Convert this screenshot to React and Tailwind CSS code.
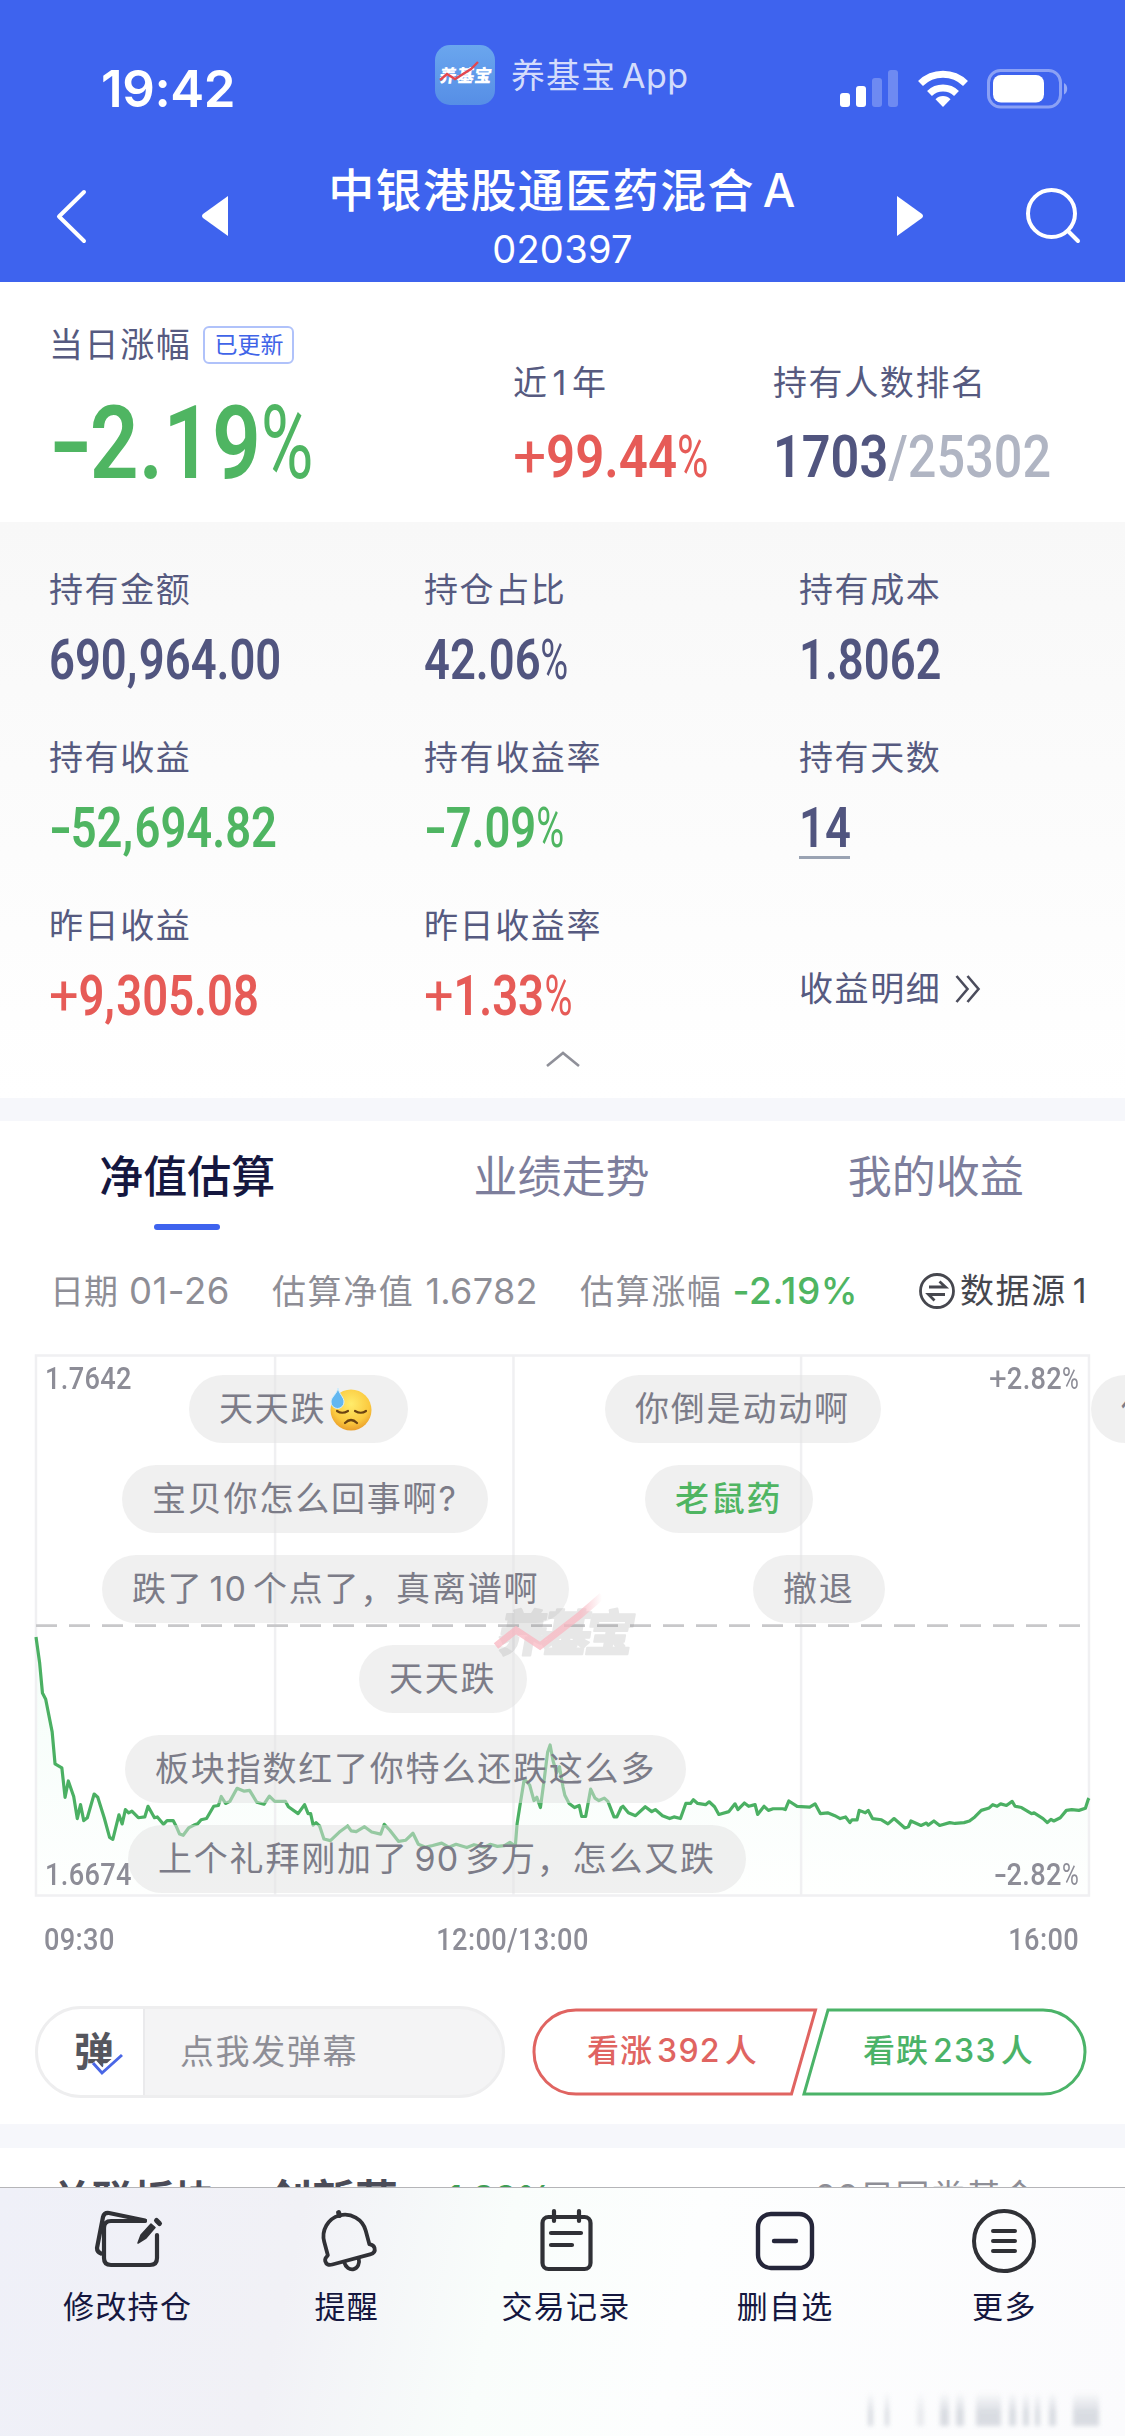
import React from "react";

/* Per-character adjustments that give the figures their narrow percent sign and wide signs. */
const glyphStyle = {
  "%": "inline-block origin-left scale-x-[0.84] -mr-[0.12em] font-normal",
  "+": "inline-block origin-left scale-x-[1.15] mr-[0.08em] font-normal",
  "-": "inline-block origin-left scale-x-[1.4] mr-[0.11em]",
  ",": "mr-[0.03em]",
};

/* Condensed figure used for every amount and percentage. */
function Num({ value, children, className = "" }) {
  return (
    <span className={`inline-block whitespace-nowrap font-['Roboto',sans-serif] ${className}`}>
      {value.split(/([%+,-])/).map((part, i) =>
        glyphStyle[part] ? (
          <span key={i} className={glyphStyle[part]}>
            {part}
          </span>
        ) : (
          part
        )
      )}
      {children}
    </span>
  );
}

function StatusBar() {
  return (
    <div className="flex h-[140px] text-white">
      <div className="w-[435px] pl-[101px] pt-[59px] text-[51px] font-semibold leading-[60px] tracking-[-0.4px]">
        19:42
      </div>
      <div className="flex w-[405px] pt-[45px]">
        <svg className="h-[60px] w-[60px]" viewBox="0 0 60 60">
          <defs>
            <linearGradient id="appBg" x1="0" y1="0" x2="0" y2="1">
              <stop offset="0" stopColor="#6aa6ee" />
              <stop offset="1" stopColor="#568ee6" />
            </linearGradient>
          </defs>
          <rect width="60" height="60" rx="15" fill="url(#appBg)" />
          <text x="30" y="37" textAnchor="middle" fontSize="17.5" fontWeight="900" fill="#fff" fontFamily="'Noto Sans CJK SC', sans-serif" transform="translate(5 0) skewX(-8)">
            养基宝
          </text>
          <path d="M5 35 L12 29 L20 34 L36 24 L43 17" fill="none" stroke="#e2474f" strokeWidth="2.4" />
        </svg>
        <div className="ml-[16px] mt-[11px] whitespace-nowrap text-[34px] leading-[40px] tracking-[1px] text-[#d3dcfb]">
          养基宝<span className="ml-[6px] tracking-[0.5px]">App</span>
        </div>
      </div>
      <svg className="mt-[64px] h-[50px] w-[240px]" viewBox="0 0 240 50">
        <g fill="#fff">
          <rect x="0" y="29" width="10" height="14" rx="3" />
          <rect x="16" y="22" width="10" height="21" rx="3" />
          <rect x="32" y="14" width="10" height="29" rx="3" opacity=".25" />
          <rect x="48" y="6" width="10" height="37" rx="3" opacity=".25" />
          <path d="M103 43 L95.5 35.2 A10.6 10.6 0 0 1 110.500 35.2 Z" />
        </g>
        <g fill="none" stroke="#fff" strokeWidth="7">
          <path d="M89.500 29.500 A19.500 19.500 0 0 1 116.500 29.500" />
          <path d="M80.500 19.500 A32 32 0 0 1 125.500 19.500" />
        </g>
        <rect x="148.500" y="6.500" width="72" height="36.500" rx="12" fill="none" stroke="#fff" strokeWidth="3" opacity=".4" />
        <path d="M224 19 a6 6.500 0 0 1 0 11.500 Z" fill="#fff" opacity=".45" />
        <rect x="153" y="11" width="51" height="27.500" rx="8" fill="#fff" />
      </svg>
    </div>
  );
}

function TitleBar() {
  return (
    <div className="flex h-[142px] text-white">
      <svg className="mt-[46px] ml-[53px] h-[60px] w-[40px]" viewBox="0 0 40 60">
        <path d="M31 6 L6 30.500 L31 55" fill="none" stroke="#fff" strokeWidth="4" strokeLinecap="round" strokeLinejoin="round" />
      </svg>
      <svg className="mt-[56px] ml-[109px] h-[40px] w-[26px]" viewBox="0 0 26 40">
        <path d="M26 0 V40 L1 22 Q-1 20 1 18 Z" fill="#fff" />
      </svg>
      <div className="w-[669px] text-center">
        <div className="mt-[25px] whitespace-nowrap text-[46px] font-medium leading-[50px] tracking-[1.400px]">
          中银港股通医药混合<span className="ml-[8px]">A</span>
        </div>
        <div className="mt-[13px] text-[38px] leading-[42px] tracking-[0.3px]">020397</div>
      </div>
      <svg className="mt-[56px] h-[40px] w-[26px]" viewBox="0 0 26 40">
        <path d="M0 0 V40 L25 22 Q27 20 25 18 Z" fill="#fff" />
      </svg>
      <svg className="mt-[46px] ml-[102px] h-[60px] w-[60px]" viewBox="0 0 60 60">
        <circle cx="26.500" cy="27.500" r="23.500" fill="none" stroke="#fff" strokeWidth="4" />
        <path d="M43 45 L53 55" stroke="#fff" strokeWidth="4" strokeLinecap="round" />
      </svg>
    </div>
  );
}

const label = "whitespace-nowrap text-[34px] leading-[42px] tracking-[1.600px] text-[#565a80]";

function Summary() {
  return (
    <section className="flex h-[240px] bg-white">
      <div className="w-[513px] pl-[49px] pt-[42px]">
        <div className="flex items-center">
          <span className={label}>当日涨幅</span>
          <span className="ml-[12px] h-[38px] rounded-[6px] border-2 border-[#b0c2fa] px-[9px] text-[23px] leading-[34px] text-[#4064e8]">
            已更新
          </span>
        </div>
        <Num
          value="-2.19%"
          className="mt-[37px] origin-left scale-x-[0.84] text-[102px] font-semibold leading-[80px] text-[#4fb562]"
        />
      </div>
      <div className="w-[260px] pt-[80px]">
        <div className={label}>
          近<span className="mx-[4px]">1</span>年
        </div>
        <Num
          value="+99.44%"
          className="mt-[23px] origin-left scale-x-[0.85] text-[60px] font-semibold leading-[60px] text-[#e65b57]"
        />
      </div>
      <div className="pt-[80px]">
        <div className={label}>持有人数排名</div>
        <Num
          value="1703"
          className="mt-[23px] origin-left scale-x-[0.84] text-[60px] font-semibold leading-[60px] text-[#51557f]"
        >
          <span className="font-medium text-[#b0b5c3]">/25302</span>
        </Num>
      </div>
    </section>
  );
}

const holdings = [
  ["持有金额", "690,964.00", "text-[#51557f]"],
  ["持仓占比", "42.06%", "text-[#51557f]"],
  ["持有成本", "1.8062", "text-[#51557f]"],
  ["持有收益", "-52,694.82", "text-[#4fb562]"],
  ["持有收益率", "-7.09%", "text-[#4fb562]"],
  ["持有天数", "14", "text-[#51557f]"],
  ["昨日收益", "+9,305.08", "text-[#e65b57]"],
  ["昨日收益率", "+1.33%", "text-[#e65b57]"],
];

function Holdings() {
  return (
    <section className="h-[576px] bg-linear-to-b from-[#f8f8f8] to-white pt-[47px]">
      <div className="grid h-[462px] auto-rows-[168px] grid-cols-3">
        {holdings.map(([name, value, color]) => (
          <div key={name} className="pl-[49px]">
            <div className={label}>{name}</div>
            <Num
              value={value}
              className={`mt-[19px] origin-left scale-x-[0.825] text-[55px] font-semibold leading-[60px] ${color}`}
            />
            {name === "持有天数" && <div className="-mt-[2px] h-[3px] w-[51px] bg-[#9aa3b3]" />}
          </div>
        ))}
        <div className="flex pl-[49px] pt-[63px]">
          <span className={label}>收益明细</span>
          <svg className="ml-[14px] mt-[6px] h-[30px] w-[26px]" viewBox="0 0 26 30">
            <path d="M1.500 2 L12.500 15 L1.500 28 M12.500 2 L23.500 15 L12.500 28" fill="none" stroke="#4b4c5c" strokeWidth="2.6" />
          </svg>
        </div>
      </div>
      <svg className="mx-auto mt-[18px] h-[20px] w-[36px]" viewBox="0 0 36 20">
        <path d="M2 17 L18 4 L34 17" fill="none" stroke="#8f9099" strokeWidth="2.6" />
      </svg>
    </section>
  );
}

function Tabs() {
  return (
    <div className="grid grid-cols-3 pr-[2px] pt-[31px] text-center text-[44px] leading-[50px] text-[#7d7e9c]">
      <div className="font-medium text-[#15173f]">
        净值估算
        <div className="mx-auto mt-[22px] h-[6px] w-[66px] rounded-full bg-[#3e63ee]" />
      </div>
      <div>业绩走势</div>
      <div>我的收益</div>
    </div>
  );
}

function InfoRow() {
  return (
    <div className="mt-[39px] flex whitespace-nowrap pl-[50px] text-[34px] leading-[44px] text-[#8e8e96]">
      <div className="w-[222px]">
        日期<span className="ml-[11px] text-[36.500px] tracking-[0.500px]">01-26</span>
      </div>
      <div className="w-[308px] tracking-[1.600px]">
        估算净值<span className="ml-[11px] text-[36px] tracking-[0.300px]">1.6782</span>
      </div>
      <div className="w-[338px] tracking-[1.600px]">
        估算涨幅<span className="ml-[10px] text-[37px] font-medium tracking-[0.600px] text-[#4fb562]">-2.19%</span>
      </div>
      <div className="flex tracking-[1.600px] text-[#46474e]">
        <svg className="mt-[3px] h-[38px] w-[38px]" viewBox="0 0 38 38" fill="none" stroke="#46474e" strokeWidth="2.8">
          <circle cx="19" cy="19" r="16.500" />
          <path d="M11 15 H27.500 L21.500 9.500 M27 22.500 H10.500 L16.500 28.500" />
        </svg>
        <span className="ml-[4px]">数据源</span>
        <span className="ml-[6px]">1</span>
      </div>
    </div>
  );
}

/* Intraday estimate samples in chart units; the second list is the afternoon session. */
const morning =
  "100,728 110,790 118,865 127,880 145,960 153,1038 172,1048 181,1120 190,1080 205,1118 215,1172 224,1138 233,1177 243,1170 262,1112 272,1120 290,1170 305,1218 314,1223 331,1163 340,1185 349,1150 358,1158 367,1154 385,1170 403,1168 412,1142 430,1170 438,1168 455,1186 465,1177 482,1177 490,1190 500,1210 510,1213 525,1195 540,1188 550,1185 560,1175 575,1172 595,1142 608,1140 616,1118 628,1135 640,1130 660,1098 680,1105 695,1103 715,1132 735,1137 750,1117 765,1130 795,1130 803,1143 830,1160 848,1138 858,1160 865,1160 872,1188 880,1182 890,1190 902,1222 920,1226 945,1205 968,1190 978,1202 992,1204 1015,1192 1035,1205 1060,1210 1070,1186 1085,1200 1110,1228 1130,1225 1150,1208 1165,1235 1185,1242 1205,1238 1230,1232 1250,1242 1270,1235 1300,1243 1320,1236 1350,1242 1365,1235 1385,1240 1405,1238 1420,1230 1435,1240";
const afternoon =
  "1440,1185 1448,1140 1460,1075 1475,1090 1487,1128 1495,1120 1505,1145 1515,1080 1525,1010 1532,992 1540,1030 1550,1060 1558,1045 1568,1095 1573,1115 1585,1135 1600,1145 1613,1140 1620,1167 1631,1167 1645,1100 1657,1122 1668,1128 1683,1122 1693,1130 1710,1168 1718,1168 1730,1145 1735,1142 1750,1158 1770,1165 1797,1143 1815,1155 1825,1150 1845,1165 1865,1172 1877,1168 1895,1172 1910,1135 1923,1135 1931,1126 1943,1135 1965,1138 1975,1131 1990,1143 2002,1162 2030,1155 2047,1136 2055,1150 2073,1134 2085,1142 2103,1138 2110,1162 2128,1142 2140,1152 2153,1148 2180,1148 2187,1150 2197,1129 2220,1142 2255,1144 2270,1136 2285,1160 2305,1158 2325,1165 2340,1172 2355,1168 2367,1182 2373,1175 2387,1175 2393,1152 2410,1158 2418,1152 2430,1172 2455,1175 2473,1185 2490,1172 2520,1195 2530,1192 2537,1178 2565,1189 2580,1183 2585,1188 2601,1178 2617,1189 2645,1182 2660,1184 2685,1182 2700,1178 2715,1168 2733,1152 2755,1146 2765,1138 2777,1142 2787,1136 2803,1140 2819,1130 2827,1142 2845,1145 2873,1160 2880,1158 2905,1172 2917,1182 2927,1174 2935,1178 2953,1170 2970,1152 2985,1150 3005,1152 3023,1147 3031,1125 3033,1122";
const series = `${morning} ${afternoon}`;

/* Floating viewer comments: text, left, top, width inside the chart. */
const comments = [
  ["天天跌", 153, 20, 219, "sweat"],
  ["你倒是动动啊", 569, 20, 276],
  ["你", 1055, 20, 160],
  ["宝贝你怎么回事啊?", 86, 110, 366],
  ["老鼠药", 609, 110, 168, "mine"],
  ["跌了10个点了，真离谱啊", 66, 200, 467],
  ["撤退", 717, 200, 132],
  ["天天跌", 323, 290, 168],
  ["板块指数红了你特么还跌这么多", 89, 380, 561],
  ["上个礼拜刚加了90多万，怎么又跌", 92, 470, 618],
];

function SweatFace() {
  return (
    <svg className="ml-[3px] h-[44px] w-[44px] shrink-0" viewBox="0 0 44 44">
      <defs>
        <radialGradient id="face" cx=".5" cy=".35" r=".65">
          <stop offset="0" stopColor="#ffec6b" />
          <stop offset=".7" stopColor="#fbc93f" />
          <stop offset="1" stopColor="#ea9f2b" />
        </radialGradient>
      </defs>
      <circle cx="22" cy="23" r="20.500" fill="url(#face)" />
      <path d="M8 24 q5 3.500 11 0 M26 24 q6 3.500 11 0" fill="none" stroke="#6b4312" strokeWidth="2.200" strokeLinecap="round" />
      <path d="M16 36 q6 -6 12 0" fill="none" stroke="#6b4312" strokeWidth="2.200" strokeLinecap="round" />
      <path d="M9 1 C10 7 15 10 15 15 A6.500 6.500 0 0 1 2 15 C2 10 8 7 9 1 Z" fill="#62b7f0" stroke="#d4effc" strokeWidth="1" />
    </svg>
  );
}

function Comment({ item: [text, left, top, width, kind] }) {
  const parts = text.split(/(\d+|，)/);
  return (
    <div
      className={`absolute flex h-[68px] items-center whitespace-nowrap rounded-full bg-[#e1e1e1]/50 pl-[30px] text-[34px] leading-[42px] tracking-[1.800px] ${
        kind === "mine" ? "font-medium text-[#4fb562]" : "text-[#7c7c88]"
      }`}
      style={{ left, top, width }}
    >
      {parts.map((part, i) => {
        if (part === "，") return <span key={i} className="font-['Noto_Sans_CJK_SC',sans-serif]">{part}</span>;
        return (
          <span key={i} className={i % 2 ? "mx-[6px] tracking-[1px]" : ""}>
            {part}
          </span>
        );
      })}
      {kind === "sweat" && <SweatFace />}
    </div>
  );
}

const axis = "text-[32px] font-medium leading-[30px] tracking-[0.400px] text-[#8d8d97]";

function Chart() {
  return (
    <div className="relative ml-[36px] mt-[41px] h-[540px] w-[1053px]">
      <svg className="block h-full w-full overflow-visible" viewBox="100 40 2933 1321" preserveAspectRatio="none">
        <defs>
          <linearGradient id="area" x1="0" y1="0" x2="0" y2="1">
            <stop offset="0" stopColor="#f4fdf9" />
            <stop offset="1" stopColor="#fefffe" />
          </linearGradient>
        </defs>
        <polygon points={`${series} 3033,1361 100,1361`} fill="url(#area)" />
        <g stroke="#f0f0f2" strokeWidth="2.500" fill="none">
          <rect x="100" y="41" width="2933" height="1321" vectorEffect="non-scaling-stroke" />
          <path d="M766 40 V1361 M1430 40 V1361 M2231 40 V1361" vectorEffect="non-scaling-stroke" />
        </g>
        <path d="M100 702 H3008" stroke="#c8c8ca" strokeWidth="2.600" strokeDasharray="21 12" vectorEffect="non-scaling-stroke" />
        <polyline points={series} fill="none" stroke="#4bb063" strokeWidth="3.200" strokeLinejoin="round" transform="translate(0 2)" vectorEffect="non-scaling-stroke" />
      </svg>
      <div className="absolute left-[9px] right-[10px] top-[8px] flex justify-between">
        <Num value="1.7642" className={`origin-left scale-x-[0.85] ${axis}`} />
        <Num value="+2.82%" className={`origin-right scale-x-[0.85] ${axis}`} />
      </div>
      <div className="absolute bottom-[6px] left-[9px] right-[10px] flex justify-between">
        <Num value="1.6674" className={`origin-left scale-x-[0.85] ${axis}`} />
        <Num value="-2.82%" className={`origin-right scale-x-[0.85] ${axis}`} />
      </div>
      {comments.map((item) => (
        <Comment key={item[1]} item={item} />
      ))}
      <svg className="absolute left-[456px] top-[232px] h-[80px] w-[160px]" viewBox="0 0 160 80">
        <defs>
          <linearGradient id="trend" x1="0" y1="0" x2="1" y2="0">
            <stop offset="0" stopColor="#f9b5c0" />
            <stop offset=".8" stopColor="#f9b9c3" />
            <stop offset="1" stopColor="#f9b9c3" stopOpacity="0" />
          </linearGradient>
        </defs>
        <g opacity=".2">
          <text x="0" y="64" textLength="136" fontSize="49" fontWeight="900" fill="#8a8a8a" stroke="#8a8a8a" strokeWidth="2" strokeLinejoin="round" fontFamily="'Noto Sans CJK SC', sans-serif" transform="translate(15 0) skewX(-10)">
            养基宝
          </text>
        </g>
        <path d="M4 59 L24 43 L48 59 L88 28 L110 9" fill="none" stroke="url(#trend)" strokeOpacity=".75" strokeWidth="7" />
      </svg>
    </div>
  );
}

function VoteRow() {
  return (
    <div className="mt-[51px] flex h-[94px] items-center pl-[35px]">
      <div className="flex h-[92px] w-[470px] overflow-hidden rounded-full border-[3px] border-[#eeeeef] bg-[#f4f4f5]">
        <div className="relative w-[107px] border-r-2 border-[#eaeaec] bg-white pl-[36px] pt-[20px] text-[40px] font-bold leading-[46px] text-[#55565e]">
          弹
          <svg className="absolute left-[52px] top-[42px] h-[28px] w-[36px]" viewBox="0 0 36 28">
            <path d="M3 12 L12 22 L32 4" fill="none" stroke="#fff" strokeWidth="8" />
            <path d="M3 12 L12 22 L32 4" fill="none" stroke="#4a67e6" strokeWidth="3" />
          </svg>
        </div>
        <div className="pl-[35px] text-[34px] leading-[86px] tracking-[1.600px] text-[#8e8e96]">点我发弹幕</div>
      </div>
      <div className="relative ml-[26px] h-[90px] w-[557px]">
        <svg className="block h-full w-full" viewBox="0 0 557 90" fill="none" strokeWidth="3">
          <path d="M45 3 H284.500 L260.500 87 H45 A42 42 0 0 1 45 3 Z" stroke="#e06461" />
          <path d="M297 3 H512 A42 42 0 0 1 512 87 H273 Z" stroke="#4bb368" />
        </svg>
        <div className="absolute inset-0 flex text-[32px] font-medium leading-[88px] tracking-[1px]">
          <div className="w-[276px] pl-[56px] text-[#e06461]">
            看涨<span className="mx-[4px] tracking-[1.300px]">392</span>人
          </div>
          <div className="pl-[56px] text-[#4bb368]">
            看跌<span className="mx-[4px] tracking-[1.300px]">233</span>人
          </div>
        </div>
      </div>
    </div>
  );
}

function RelatedRow() {
  return (
    <div className="flex h-[39px] overflow-hidden whitespace-nowrap pl-[51px] pt-[27px] leading-[50px]">
      <div className="w-[218px] text-[41px] font-bold text-[#4b4c58]">关联板块</div>
      <div className="w-[162px] text-[43px] font-bold text-[#4b4c58]">创新药</div>
      <div className="-mt-[2px] w-[384px] text-[35px] font-semibold text-[#3f9e55]">-1.39%</div>
      <div className="-mt-[3px] text-[34px] tracking-[1.600px] text-[#8e8e96]">28只同类基金 ›</div>
    </div>
  );
}

const line = { fill: "none", stroke: "#303136", strokeWidth: 4.2, strokeLinecap: "round", strokeLinejoin: "round" };

const actions = [
  [
    "修改持仓",
    <g key="i" {...line}>
      <path d="M50 11 H16 Q9 11 9 18 V48 Q9 55 16 55 H55 Q62 55 62 48 V25" />
      <path d="M50 10.500 L14 3 Q9 2.500 8 7 L2 38 Q2 42 6 43.500" />
      <path d="M43 33 L46 25 L56 14 L60 17.500 L51 28 Z" fill="#303136" strokeWidth="1.500" />
      <path d="M61.500 10.500 L64.500 13.500" strokeWidth="5" />
    </g>,
  ],
  [
    "提醒",
    <g key="i" {...line} strokeWidth="3.800" transform="translate(-1.500 0) rotate(-15 34 30)">
      <path d="M14 50 Q8 50 8 45 Q8 42 12 40 V26 A21.500 21.500 0 0 1 55 26 V40 Q59 42 59 45 Q59 50 53 50 Z" />
      <path d="M33.500 4.500 V1.500" strokeWidth="5" />
      <path d="M26 51 A7.500 9 0 0 0 41 51" />
    </g>,
  ],
  [
    "交易记录",
    <g key="i" {...line}>
      <rect x="9.500" y="7" width="48" height="52" rx="6" />
      <path d="M21 1 V11 M46 1 V11 M18 23 H48 M18 35 H39" />
    </g>,
  ],
  [
    "删自选",
    <g key="i" {...line} stroke="#25263a" strokeWidth="4.400">
      <rect x="6" y="4" width="54" height="54" rx="13" />
      <path d="M22 31 H44" />
    </g>,
  ],
  [
    "更多",
    <g key="i" {...line} strokeWidth="4">
      <circle cx="33" cy="31" r="30" />
      <path d="M22 21 H44 M22 31 H44 M22 41 H44" />
    </g>,
  ],
];

const haze = [
  "ml-0 w-[5px] bg-gray-300", "ml-[12px] w-[4px] bg-gray-300", "ml-[28px] w-[7px] bg-gray-200",
  "ml-[16px] w-[9px] bg-gray-300", "ml-[7px] w-[8px] bg-gray-300", "ml-[12px] w-[25px] bg-gray-300",
  "ml-[8px] w-[7px] bg-gray-300", "ml-[7px] w-[6px] bg-gray-300", "ml-[6px] w-[5px] bg-gray-300",
  "ml-[9px] w-[7px] bg-gray-300", "ml-[17px] w-[26px] bg-gray-300",
];

function ActionBar() {
  return (
    <nav className="relative h-[250px] border-t border-[#b5b5b8] bg-[linear-gradient(102deg,#eff0f8_0%,#f1f1f6_26%,#f9fdfb_44%,#fdfefe_60%,#fbfbfd_100%)]">
      <div className="grid grid-cols-5 pl-[18px] pr-[11px] pt-[20px]">
        {actions.map(([name, icon]) => (
          <div key={name} className="flex flex-col items-center">
            <svg className="h-[66px] w-[66px] overflow-visible" viewBox="0 -2 66 66">
              {icon}
            </svg>
            <div className="mt-[11px] whitespace-nowrap text-[31px] leading-[43px] tracking-[1.300px] text-[#15173f]">{name}</div>
          </div>
        ))}
      </div>
      <div className="absolute bottom-[11px] left-[868px] flex h-[34px] w-[246px] overflow-hidden opacity-80 blur-[2px]">
        {haze.map((bar, i) => (
          <div key={i} className={`h-full shrink-0 mask-t-from-40% ${bar}`} />
        ))}
      </div>
    </nav>
  );
}

export default function App() {
  return (
    <div lang="zh-CN" className="h-[2436px] w-[1125px] overflow-hidden bg-white font-['Inter','Noto_Sans_CJK_SC',sans-serif]">
      <header className="h-[282px] bg-[#3e63ee]">
        <StatusBar />
        <TitleBar />
      </header>
      <Summary />
      <Holdings />
      <div className="h-[23px] bg-[#f6f7fb]" />
      <Tabs />
      <InfoRow />
      <Chart />
      <div className="mt-[29px] grid h-[30px] grid-cols-3 pl-[44px] pr-[46px]">
        <Num value="09:30" className={`origin-left scale-x-[0.85] ${axis}`} />
        <Num value="12:00/13:00" className={`-ml-[98px] origin-center scale-x-[0.85] text-center ${axis}`} />
        <Num value="16:00" className={`origin-right scale-x-[0.85] text-right ${axis}`} />
      </div>
      <VoteRow />
      <div className="mt-[25px] h-[24px] bg-[#f6f7fb]" />
      <RelatedRow />
      <ActionBar />
    </div>
  );
}
